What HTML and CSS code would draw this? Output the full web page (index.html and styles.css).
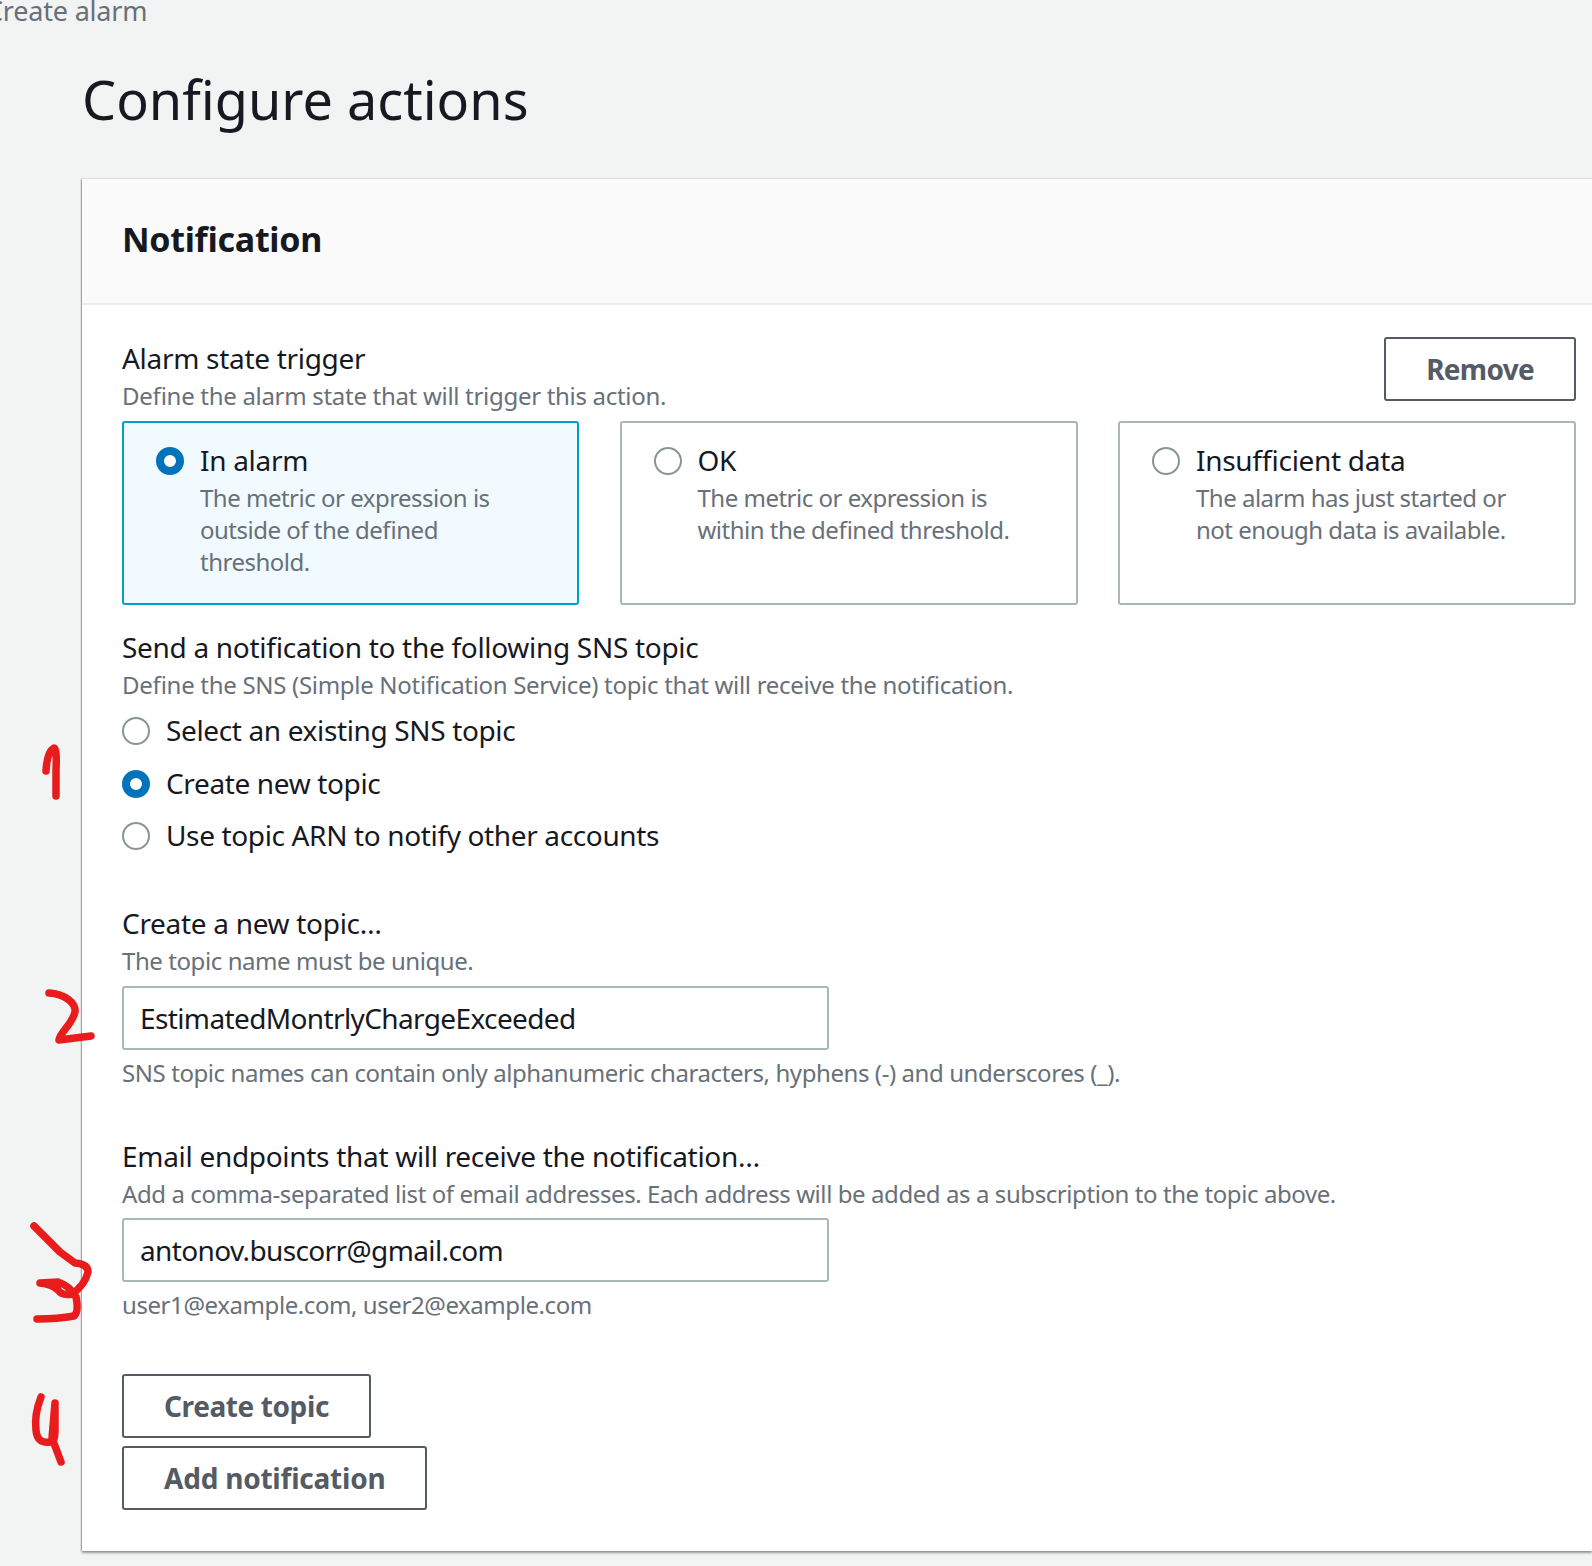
FILE: index.html
```html
<!DOCTYPE html>
<html lang="en">
<head>
    <meta charset="UTF-8">
    <title>Configure actions</title>
    <link rel="stylesheet" href="styles.css">
</head>
<body>
    <div class="crumb">Create alarm</div>
    <h1 class="title">Configure actions</h1>

    <div class="panel">
        <div class="panel-head">
            <h2>Notification</h2>
        </div>
        <div class="panel-body">
            <div class="trigger-head">
                <div>
                    <p class="label">Alarm state trigger</p>
                    <p class="desc">Define the alarm state that will trigger this action.</p>
                </div>
                <button class="btn btn-remove">Remove</button>
            </div>

            <div class="tiles">
                <div class="tile selected">
                    <span class="radio on"></span>
                    <div>
                        <p class="label">In alarm</p>
                        <p class="desc">The metric or expression is outside of the defined threshold.</p>
                    </div>
                </div>
                <div class="tile">
                    <span class="radio"></span>
                    <div>
                        <p class="label">OK</p>
                        <p class="desc">The metric or expression is within the defined threshold.</p>
                    </div>
                </div>
                <div class="tile">
                    <span class="radio"></span>
                    <div>
                        <p class="label">Insufficient data</p>
                        <p class="desc">The alarm has just started or not enough data is available.</p>
                    </div>
                </div>
            </div>

            <div class="sns">
                <p class="label">Send a notification to the following SNS topic</p>
                <p class="desc">Define the SNS (Simple Notification Service) topic that will receive the notification.</p>
                <div class="options">
                    <div class="option"><span class="radio"></span><span class="label">Select an existing SNS topic</span></div>
                    <div class="option"><span class="radio on"></span><span class="label">Create new topic</span></div>
                    <div class="option"><span class="radio"></span><span class="label">Use topic ARN to notify other accounts</span></div>
                </div>
            </div>

            <div class="field topic-field">
                <p class="label">Create a new topic…</p>
                <p class="desc">The topic name must be unique.</p>
                <input class="text" value="EstimatedMontrlyChargeExceeded">
                <p class="desc hint">SNS topic names can contain only alphanumeric characters, hyphens (-) and underscores (_).</p>
            </div>

            <div class="field email-field">
                <p class="label">Email endpoints that will receive the notification…</p>
                <p class="desc">Add a comma-separated list of email addresses. Each address will be added as a subscription to the topic above.</p>
                <input class="text" value="antonov.buscorr@gmail.com">
                <p class="desc hint">user1@example.com, user2@example.com</p>
            </div>

            <div class="actions">
                <button class="btn">Create topic</button>
                <button class="btn btn-add">Add notification</button>
            </div>
        </div>
    </div>

    <!-- red pen marks drawn over the screenshot -->
    <svg class="pen" width="100" height="1566" viewBox="0 0 100 1566">
        <path d="M46 771 Q47 752 54 748 Q57 748 56 770 L56 796"/>
        <path d="M49 993 C65 994 76 1003 75 1012 C72 1025 60 1032 59 1040 L91 1036"/>
        <path d="M34 1226 L60 1252 L75 1263 Q88 1264 88 1272 Q85 1285 72 1294 Q62 1296 58 1290 Q52 1284 40 1283 L58 1282 Q70 1286 76 1297 Q79 1312 74 1316 Q58 1319 37 1319"/>
        <path d="M41 1397 Q34 1415 36 1430 Q37 1444 50 1442 Q55 1443 55 1430 L55 1403 L52 1438 L61 1462"/>
    </svg>
</body>
</html>
```

FILE: styles.css
```css
/* Page */
body {
  margin: 0;
  width: 1592px;
  height: 1566px;
  overflow: hidden;
  position: relative;
  background-color: #f2f3f3;
  color: #16191f;
  font-family: "Noto Sans", Arial, sans-serif;
  font-feature-settings: "liga" 1;
}

p {
  margin: 0;
}

.crumb {
  margin-top: -9px;
  margin-left: -14px;
  height: 40px;
  line-height: 40px;
  font-size: 27px;
  letter-spacing: -0.2px;
  color: #687078;
}

.title {
  margin: 29px 0 0 82px;
  height: 78px;
  line-height: 78px;
  font-size: 54px;
  font-weight: 400;
}

/* Notification panel */
.panel {
  margin: 41px 0 0 82px;
  background-color: white;
  box-shadow: -1px 0 1px rgba(0, 28, 36, 0.25), 0 2px 2px rgba(0, 28, 36, 0.4), 0 -1px 1px rgba(0, 28, 36, 0.06);
}

.panel-head {
  height: 124px;
  padding-left: 40px;
  display: flex;
  align-items: center;
  background-color: #fafafa;
  border-bottom: 2px solid #eaeded;
}

.panel-head h2 {
  margin: 0 0 4px;
  font-size: 34px;
  font-weight: 700;
  letter-spacing: -0.3px;
}

.panel-body {
  padding: 33px 16px 41px 40px;
}

.label {
  font-size: 28px;
  line-height: 40px;
  letter-spacing: -0.3px;
}

.desc {
  font-size: 24px;
  line-height: 32px;
  letter-spacing: -0.3px;
  color: #687078;
}

.label + .desc {
  margin-top: 2px;
}

.trigger-head {
  display: flex;
  justify-content: space-between;
  height: 83px;
}

.trigger-head .btn {
  margin-top: -1px;
}

.btn {
  height: 64px;
  padding: 0 40px;
  background-color: white;
  border: 2px solid #545b64;
  border-radius: 3px;
  color: #545b64;
  font-family: inherit;
  font-size: 28px;
  font-weight: 700;
  letter-spacing: -0.4px;
}

.btn-remove {
  letter-spacing: -0.7px;
}

.btn-add {
  letter-spacing: -0.22px;
}

/* Alarm state tiles */
.tiles {
  display: grid;
  grid-template-columns: 457px 458px 458px;
  column-gap: 40.5px;
}

.tile {
  height: 184px;
  box-sizing: border-box;
  padding: 17px 32px;
  display: flex;
  gap: 16px;
  border: 2px solid #aab7b8;
  border-radius: 3px;
}

.tile.selected {
  background-color: #f1faff;
  border-color: #00a1c9;
}

.tile .radio {
  margin-top: 7px;
}

.tile .desc {
  letter-spacing: -0.5px;
}

.radio {
  flex: none;
  width: 28px;
  height: 28px;
  box-sizing: border-box;
  border: 2px solid #879596;
  border-radius: 50%;
  background-color: white;
}

.radio.on {
  border: 8px solid #0073bb;
}

/* SNS topic */
.sns {
  margin-top: 22px;
}

.options {
  margin-top: 4px;
}

.option {
  height: 52.5px;
  display: flex;
  align-items: center;
  gap: 16px;
}

.option .label {
  padding-bottom: 2px;
  letter-spacing: -0.36px;
}

.field .text {
  display: block;
  width: 707px;
  height: 64px;
  box-sizing: border-box;
  padding: 0 16px;
  background-color: white;
  border: 2px solid #aab7b8;
  border-radius: 3px;
  color: #16191f;
  font-family: inherit;
  font-size: 28px;
  letter-spacing: -0.62px;
}

.field .desc {
  margin-bottom: 9px;
  letter-spacing: -0.42px;
}

.field .hint {
  margin: 7px 0 0;
}

.topic-field {
  margin-top: 40px;
}

.email-field {
  margin-top: 47px;
}

.email-field .desc {
  margin-bottom: 8px;
}

.actions {
  margin-top: 53px;
  display: flex;
  flex-direction: column;
  align-items: flex-start;
  gap: 8px;
}

/* Pen marks */
.pen {
  position: absolute;
  top: 0;
  left: 0;
}

.pen path {
  fill: none;
  stroke: #e81c1c;
  stroke-width: 7.5;
  stroke-linecap: round;
  stroke-linejoin: round;
}
```
